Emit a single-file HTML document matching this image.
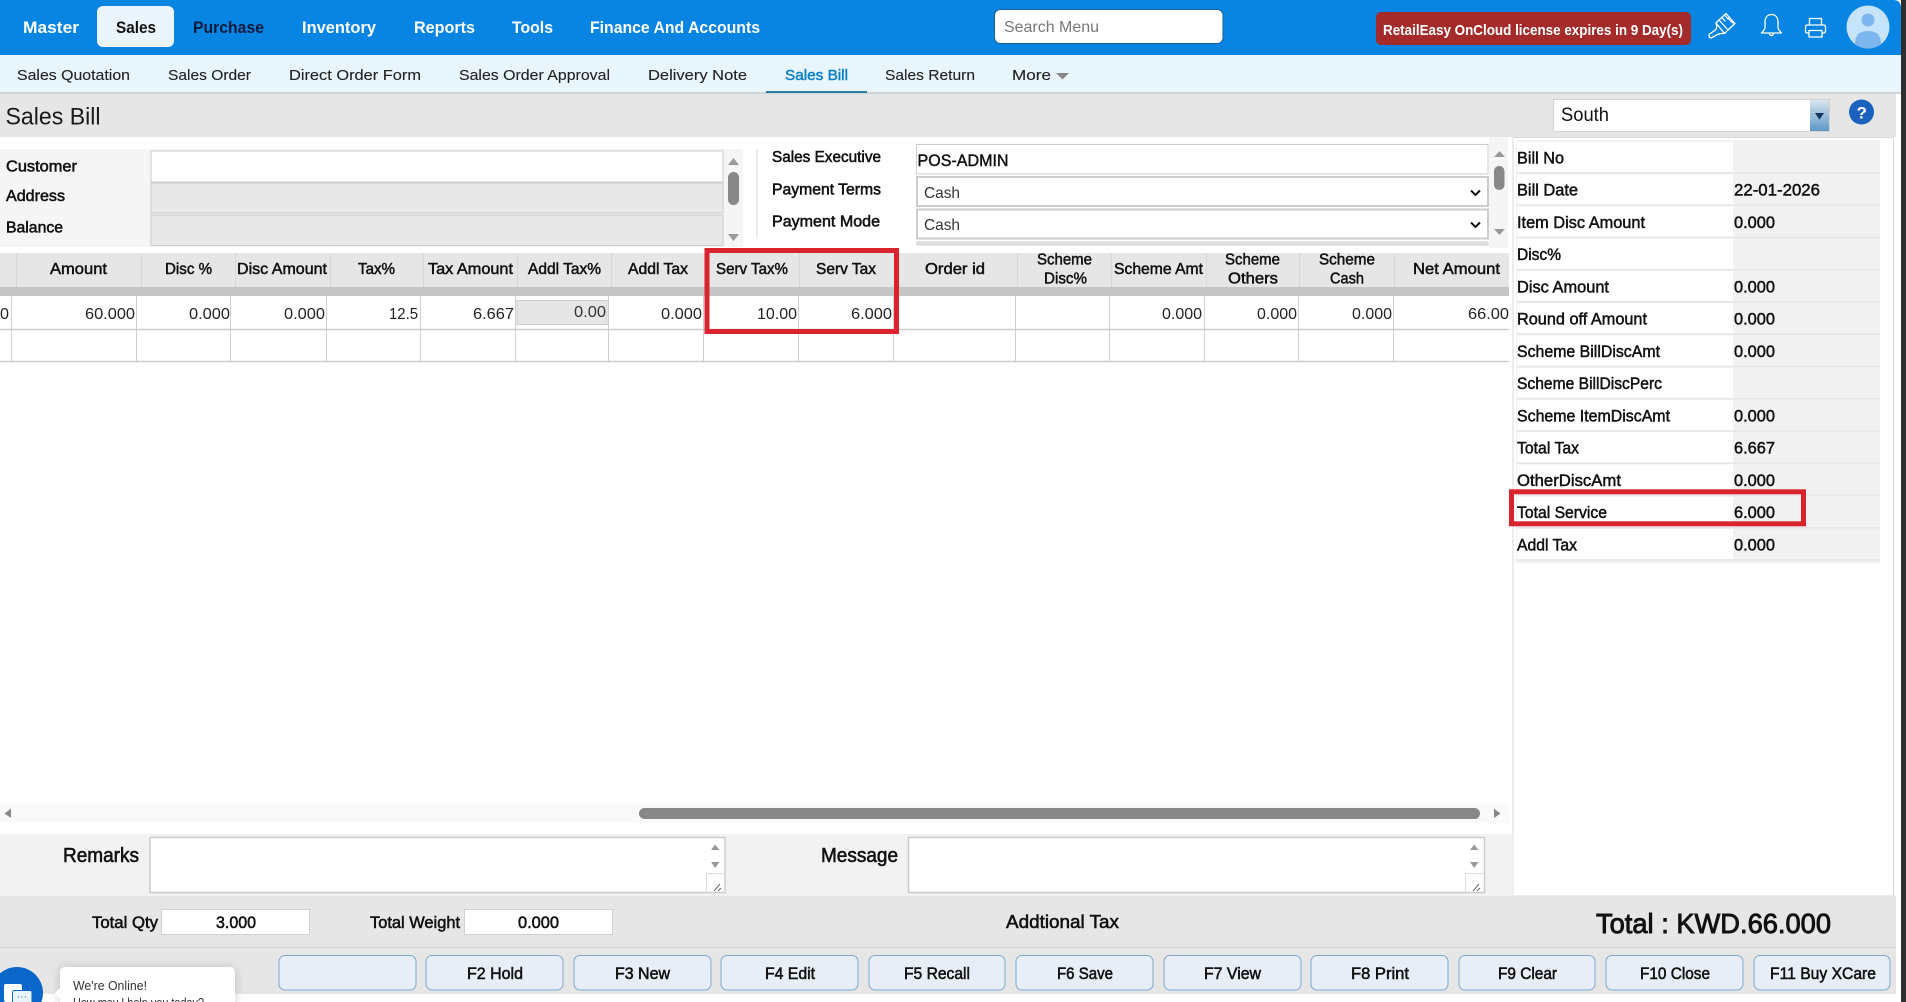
<!DOCTYPE html>
<html lang="en"><head><meta charset="utf-8"><title>Sales Bill</title>
<style>
html,body{margin:0;padding:0;width:1906px;height:1002px;overflow:hidden;background:#fff}
svg{display:block;position:absolute;left:0;top:0}
text{font-family:"Liberation Sans",Arial,sans-serif;fill:#111;white-space:pre}
.nav{font-size:17px;font-weight:bold;fill:#fff}
.sub{font-size:15px;fill:#222;stroke:#222;stroke-width:.12}
.l{font-size:16px;stroke:#111;stroke-width:.55}
.h{font-size:16px;stroke:#111;stroke-width:.5}
.v{font-size:16px;fill:#222}
.r{font-size:17px;stroke:#111;stroke-width:.5}
.b{font-size:17px;stroke:#111;stroke-width:.55}
.tri{fill:#999}
</style></head><body>
<svg width="1906" height="1002" viewBox="0 0 1906 1002" xmlns="http://www.w3.org/2000/svg">
<rect width="1906" height="1002" fill="#fff"/>
<!-- top bar -->
<path d="M0 0H1893Q1901 0 1901 8V55H0Z" fill="#0884e3"/>
<rect x="97" y="6" width="77" height="41" rx="6" fill="#eaf5fd"/>
<text class="nav" x="23" y="33" textLength="56" lengthAdjust="spacingAndGlyphs">Master</text>
<text class="nav" x="116" y="33" textLength="40" lengthAdjust="spacingAndGlyphs" style="fill:#111">Sales</text>
<text class="nav" x="193" y="33" textLength="71" lengthAdjust="spacingAndGlyphs" style="fill:#0b1a3a">Purchase</text>
<text class="nav" x="302" y="33" textLength="74" lengthAdjust="spacingAndGlyphs">Inventory</text>
<text class="nav" x="414" y="33" textLength="61" lengthAdjust="spacingAndGlyphs">Reports</text>
<text class="nav" x="512" y="33" textLength="41" lengthAdjust="spacingAndGlyphs">Tools</text>
<text class="nav" x="590" y="33" textLength="170" lengthAdjust="spacingAndGlyphs">Finance And Accounts</text>
<rect x="994.500" y="9.500" width="228.500" height="34" rx="6" fill="#fff" stroke="#17608f"/>
<text x="1004" y="32" font-size="16" style="fill:#777" textLength="95" lengthAdjust="spacingAndGlyphs">Search Menu</text>
<rect x="1376" y="12" width="315" height="33" rx="5" fill="#a52a2a"/>
<text x="1383" y="35" font-size="15" font-weight="bold" style="fill:#fff" textLength="300" lengthAdjust="spacingAndGlyphs">RetailEasy OnCloud license expires in 9 Day(s)</text>
<!-- icons -->
<g fill="none" stroke="#fff" stroke-width="1.3" stroke-linejoin="round" stroke-linecap="round">
<path d="M1719 20L1726 13.500L1735 23.500L1728 30ZM1716 23L1719 20L1728 30L1724.500 33.500ZM1716 23Q1718 29 1714 31L1709.500 34Q1708 37 1711 38L1715 36Q1719 33 1724.500 33.500M1722 17.500L1725 21M1725 15.500L1728 19M1728 18L1731 21.500M1731 21L1733 23"/>
<path d="M1771.500 14.500C1767 14.500 1765 18 1765 22.500V27.500C1765 29.500 1763 31.500 1761.500 33H1781.500C1780 31.500 1778 29.500 1778 27.500V22.500C1778 18 1776 14.500 1771.500 14.500ZM1769.500 33.500A2 2 0 0 0 1773.500 33.500"/>
<path d="M1809.500 25V18.500H1821.500V25M1809 33H1807Q1805.500 33 1805.500 31V27Q1805.500 25 1807.500 25H1823.500Q1825.500 25 1825.500 27V31Q1825.500 33 1823.500 33H1822M1809 30.500H1822V37H1809Z"/>
</g>
<circle cx="1868" cy="27" r="21.500" fill="#c5e3fb"/>
<circle cx="1868" cy="20" r="6.500" fill="#7db6ec"/>
<path d="M1855 44Q1855 31 1868 31Q1881 31 1881 44Q1875 48.500 1868 48.500Q1861 48.500 1855 44Z" fill="#7db6ec"/>
<!-- sub nav -->
<rect y="55" width="1901" height="37" fill="#e8f5fd"/>
<rect y="92" width="1901" height="2" fill="#cfd6da"/>
<text class="sub" x="17" y="80" textLength="113" lengthAdjust="spacingAndGlyphs">Sales Quotation</text>
<text class="sub" x="168" y="80" textLength="83" lengthAdjust="spacingAndGlyphs">Sales Order</text>
<text class="sub" x="289" y="80" textLength="132" lengthAdjust="spacingAndGlyphs">Direct Order Form</text>
<text class="sub" x="459" y="80" textLength="151" lengthAdjust="spacingAndGlyphs">Sales Order Approval</text>
<text class="sub" x="648" y="80" textLength="99" lengthAdjust="spacingAndGlyphs">Delivery Note</text>
<text class="sub" x="785" y="80" textLength="63" lengthAdjust="spacingAndGlyphs" style="fill:#0a80c8;stroke:#0a80c8;stroke-width:.45">Sales Bill</text>
<rect x="766" y="91" width="101" height="2" fill="#2a7f9e"/>
<text class="sub" x="885" y="80" textLength="90" lengthAdjust="spacingAndGlyphs">Sales Return</text>
<text class="sub" x="1012" y="80" textLength="39" lengthAdjust="spacingAndGlyphs">More</text>
<path d="M1056 73H1069L1062.500 79.500Z" fill="#888"/>
<!-- title bar -->
<rect y="94" width="1896" height="43" fill="#e6e6e6"/>
<text x="5.500" y="124.500" font-size="24" textLength="95" lengthAdjust="spacingAndGlyphs" style="fill:#1a1a1a">Sales Bill</text>
<rect x="1553.500" y="99.500" width="276" height="32" fill="#fff" stroke="#d4d4d4"/>
<text x="1561" y="121" font-size="19" textLength="48" lengthAdjust="spacingAndGlyphs">South</text>
<defs><linearGradient id="g" x1="0" y1="0" x2="0" y2="1"><stop offset="0" stop-color="#d8e5f0"/><stop offset="1" stop-color="#5e97c6"/></linearGradient></defs>
<rect x="1810" y="100" width="19" height="31" fill="url(#g)"/>
<path d="M1815 113H1824L1819.500 119.500Z" fill="#15355c"/>
<circle cx="1861.500" cy="112" r="12.500" fill="#1a62bd"/>
<text x="1856.500" y="118.500" font-size="17" font-weight="bold" style="fill:#fff">?</text>
<!-- left form -->
<rect y="149" width="743" height="98" fill="#f5f5f5"/>
<rect x="151" y="151" width="572" height="31" fill="#fff" stroke="#ccc"/>
<rect x="151" y="183" width="572" height="30" fill="#e8e8e8" stroke="#ccc"/>
<rect x="151" y="215" width="572" height="30.500" fill="#e8e8e8" stroke="#ccc"/>
<text class="l" x="6" y="171.500" textLength="71" lengthAdjust="spacingAndGlyphs">Customer</text>
<text class="l" x="6" y="201" textLength="59" lengthAdjust="spacingAndGlyphs">Address</text>
<text class="l" x="6" y="232.500" textLength="57" lengthAdjust="spacingAndGlyphs">Balance</text>
<path class="tri" d="M728 165H739L733.500 158Z M728 234H739L733.500 241Z"/>
<rect x="728" y="172" width="11" height="33" rx="5.500" fill="#888"/>
<rect x="756.500" y="149" width="1" height="88" fill="#d4d4d4"/>
<text class="l" x="772" y="162" textLength="109" lengthAdjust="spacingAndGlyphs">Sales Executive</text>
<text class="l" x="772" y="194.500" textLength="109" lengthAdjust="spacingAndGlyphs">Payment Terms</text>
<text class="l" x="772" y="226.500" textLength="108" lengthAdjust="spacingAndGlyphs">Payment Mode</text>
<!-- right form -->
<rect x="1489" y="137" width="19" height="111" fill="#f5f5f5"/>
<rect x="916.500" y="144.500" width="571.500" height="29.500" fill="#fff" stroke="#ccc"/>
<rect x="917" y="177" width="571" height="29" fill="#fff" stroke="#ccc" stroke-width="2"/>
<rect x="917" y="209.500" width="571" height="29" fill="#fff" stroke="#ccc" stroke-width="2"/>
<rect x="917" y="242" width="571" height="3" fill="#e6e6e6" stroke="#ccc"/>
<text x="917.500" y="166" font-size="17" textLength="91" lengthAdjust="spacingAndGlyphs" style="stroke:#111;stroke-width:.45">POS-ADMIN</text>
<text x="924" y="198" font-size="16" textLength="36" lengthAdjust="spacingAndGlyphs" style="fill:#333">Cash</text>
<text x="924" y="230" font-size="16" textLength="36" lengthAdjust="spacingAndGlyphs" style="fill:#333">Cash</text>
<path d="M1471 190.500L1475.500 195L1480 190.500M1471 222.500L1475.500 227L1480 222.500" fill="none" stroke="#111" stroke-width="2"/>
<path class="tri" d="M1494 157H1505L1499.500 151Z M1494 229H1505L1499.500 235Z"/>
<rect x="1494" y="166" width="10.500" height="24" rx="5" fill="#888"/>
<!-- right panel -->
<rect x="1513" y="137.500" width="380.500" height="758.500" fill="#fff" stroke="#d8d8d8"/>
<rect x="1516" y="140" width="364" height="423" fill="#f1f1f1"/>
<g fill="#fff">
<rect x="1517" y="142" width="216" height="30"/><rect x="1517" y="174.250" width="216" height="30"/><rect x="1517" y="206.500" width="216" height="30"/><rect x="1517" y="238.750" width="216" height="30"/><rect x="1517" y="271" width="216" height="30"/><rect x="1517" y="303.250" width="216" height="30"/><rect x="1517" y="335.500" width="216" height="30"/><rect x="1517" y="367.750" width="216" height="30"/><rect x="1517" y="400" width="216" height="30"/><rect x="1517" y="432.250" width="216" height="30"/><rect x="1517" y="464.500" width="216" height="30"/><rect x="1517" y="496.750" width="216" height="30"/><rect x="1517" y="529" width="216" height="30"/>
</g>
<g>
<path d="M1517 173H1880M1517 205.200H1880M1517 237.500H1880M1517 269.700H1880M1517 302H1880M1517 334.200H1880M1517 366.500H1880M1517 398.700H1880M1517 431H1880M1517 463.200H1880M1517 495.500H1880M1517 527.700H1880M1517 560H1880" stroke="#e6e6e6" stroke-width="1.500" fill="none"/>
<text class="r" x="1517" y="163.300" textLength="47" lengthAdjust="spacingAndGlyphs">Bill No</text>
<text class="r" x="1517" y="195.500" textLength="61" lengthAdjust="spacingAndGlyphs">Bill Date</text>
<text class="r" x="1517" y="227.800" textLength="128" lengthAdjust="spacingAndGlyphs">Item Disc Amount</text>
<text class="r" x="1517" y="260" textLength="44" lengthAdjust="spacingAndGlyphs">Disc%</text>
<text class="r" x="1517" y="292.300" textLength="92" lengthAdjust="spacingAndGlyphs">Disc Amount</text>
<text class="r" x="1517" y="324.500" textLength="130" lengthAdjust="spacingAndGlyphs">Round off Amount</text>
<text class="r" x="1517" y="356.800" textLength="143" lengthAdjust="spacingAndGlyphs">Scheme BillDiscAmt</text>
<text class="r" x="1517" y="389" textLength="145" lengthAdjust="spacingAndGlyphs">Scheme BillDiscPerc</text>
<text class="r" x="1517" y="421.300" textLength="153" lengthAdjust="spacingAndGlyphs">Scheme ItemDiscAmt</text>
<text class="r" x="1517" y="453.500" textLength="62" lengthAdjust="spacingAndGlyphs">Total Tax</text>
<text class="r" x="1517" y="485.800" textLength="104" lengthAdjust="spacingAndGlyphs">OtherDiscAmt</text>
<text class="r" x="1517" y="518" textLength="90" lengthAdjust="spacingAndGlyphs">Total Service</text>
<text class="r" x="1517" y="550.300" textLength="60" lengthAdjust="spacingAndGlyphs">Addl Tax</text>
<text class="r" x="1734" y="195.500" textLength="86" lengthAdjust="spacingAndGlyphs">22-01-2026</text>
<text class="r" x="1734" y="227.800" textLength="41" lengthAdjust="spacingAndGlyphs">0.000</text>
<text class="r" x="1734" y="292.300" textLength="41" lengthAdjust="spacingAndGlyphs">0.000</text>
<text class="r" x="1734" y="324.500" textLength="41" lengthAdjust="spacingAndGlyphs">0.000</text>
<text class="r" x="1734" y="356.800" textLength="41" lengthAdjust="spacingAndGlyphs">0.000</text>
<text class="r" x="1734" y="421.300" textLength="41" lengthAdjust="spacingAndGlyphs">0.000</text>
<text class="r" x="1734" y="453.500" textLength="41" lengthAdjust="spacingAndGlyphs">6.667</text>
<text class="r" x="1734" y="485.800" textLength="41" lengthAdjust="spacingAndGlyphs">0.000</text>
<text class="r" x="1734" y="518" textLength="41" lengthAdjust="spacingAndGlyphs">6.000</text>
<text class="r" x="1734" y="550.300" textLength="41" lengthAdjust="spacingAndGlyphs">0.000</text>
</g>
<!-- grid -->
<rect y="253" width="1509" height="34" fill="#e6e6e6"/>
<rect y="287" width="1509" height="9" fill="#c6c6c6"/>
<path d="M16.500 253V287M141.500 253V287M235.500 253V287M330.500 253V287M423.500 253V287M517.500 253V287M611.500 253V287M705.500 253V287M799.500 253V287M894.500 253V287M1017.500 253V287M1111.500 253V287M1206.500 253V287M1299.500 253V287M1394.500 253V287" stroke="#d8d8d8" fill="none"/>
<path d="M11.500 296V362M136.500 296V362M230.500 296V362M326.500 296V362M420.500 296V362M515.500 296V362M608.500 296V362M703.500 296V362M798.500 296V362M893.500 296V362M1015.500 296V362M1109.500 296V362M1204.500 296V362M1298.500 296V362M1393.500 296V362" stroke="#d0d0d0" fill="none"/>
<path d="M0 329.500H1509M0 361.500H1509" stroke="#ccc" stroke-width="1.500" fill="none"/>
<text class="h" x="50" y="274" textLength="57" lengthAdjust="spacingAndGlyphs">Amount</text>
<text class="h" x="165" y="274" textLength="47" lengthAdjust="spacingAndGlyphs">Disc %</text>
<text class="h" x="237" y="274" textLength="90" lengthAdjust="spacingAndGlyphs">Disc Amount</text>
<text class="h" x="358" y="274" textLength="37" lengthAdjust="spacingAndGlyphs">Tax%</text>
<text class="h" x="428" y="274" textLength="85" lengthAdjust="spacingAndGlyphs">Tax Amount</text>
<text class="h" x="528" y="274" textLength="73" lengthAdjust="spacingAndGlyphs">Addl Tax%</text>
<text class="h" x="628" y="274" textLength="60" lengthAdjust="spacingAndGlyphs">Addl Tax</text>
<text class="h" x="716" y="274" textLength="72" lengthAdjust="spacingAndGlyphs">Serv Tax%</text>
<text class="h" x="816" y="274" textLength="60" lengthAdjust="spacingAndGlyphs">Serv Tax</text>
<text class="h" x="925" y="274" textLength="60" lengthAdjust="spacingAndGlyphs">Order id</text>
<text class="h" x="1037" y="264.500" textLength="55" lengthAdjust="spacingAndGlyphs">Scheme</text>
<text class="h" x="1044" y="283.500" textLength="43" lengthAdjust="spacingAndGlyphs">Disc%</text>
<text class="h" x="1114" y="274" textLength="89" lengthAdjust="spacingAndGlyphs">Scheme Amt</text>
<text class="h" x="1225" y="264.500" textLength="55" lengthAdjust="spacingAndGlyphs">Scheme</text>
<text class="h" x="1228" y="283.500" textLength="50" lengthAdjust="spacingAndGlyphs">Others</text>
<text class="h" x="1319" y="264.500" textLength="56" lengthAdjust="spacingAndGlyphs">Scheme</text>
<text class="h" x="1330" y="283.500" textLength="34" lengthAdjust="spacingAndGlyphs">Cash</text>
<text class="h" x="1413" y="274" textLength="87" lengthAdjust="spacingAndGlyphs">Net Amount</text>
<text class="v" x="0" y="319" textLength="9" lengthAdjust="spacingAndGlyphs">0</text>
<text class="v" x="85" y="319" textLength="50" lengthAdjust="spacingAndGlyphs">60.000</text>
<text class="v" x="189" y="319" textLength="41" lengthAdjust="spacingAndGlyphs">0.000</text>
<text class="v" x="284" y="319" textLength="41" lengthAdjust="spacingAndGlyphs">0.000</text>
<text class="v" x="389" y="319" textLength="29" lengthAdjust="spacingAndGlyphs">12.5</text>
<text class="v" x="473" y="319" textLength="41" lengthAdjust="spacingAndGlyphs">6.667</text>
<rect x="517" y="300.500" width="90" height="24" fill="#e6e6e6" stroke="#ccc"/>
<text class="v" x="574" y="317" textLength="32" lengthAdjust="spacingAndGlyphs" style="fill:#333">0.00</text>
<text class="v" x="661" y="319" textLength="41" lengthAdjust="spacingAndGlyphs">0.000</text>
<text class="v" x="757" y="319" textLength="40" lengthAdjust="spacingAndGlyphs">10.00</text>
<text class="v" x="851" y="319" textLength="41" lengthAdjust="spacingAndGlyphs">6.000</text>
<text class="v" x="1162" y="319" textLength="40" lengthAdjust="spacingAndGlyphs">0.000</text>
<text class="v" x="1257" y="319" textLength="40" lengthAdjust="spacingAndGlyphs">0.000</text>
<text class="v" x="1352" y="319" textLength="40" lengthAdjust="spacingAndGlyphs">0.000</text>
<text class="v" x="1468" y="319" textLength="41" lengthAdjust="spacingAndGlyphs">66.00</text>
<!-- red highlights -->
<rect x="707" y="250.500" width="189.500" height="81" fill="none" stroke="#d9232e" stroke-width="5"/>
<rect x="1511.500" y="491.800" width="292" height="32" fill="none" stroke="#d9232e" stroke-width="5"/>
<!-- h scrollbar -->
<rect y="804" width="1509" height="19" fill="#fafafa"/>
<rect x="639" y="808" width="841" height="11" rx="5.500" fill="#888"/>
<path d="M11 808.500V818L4.500 813.500Z" fill="#888"/>
<path d="M1494 808.500V818L1500.500 813.500Z" fill="#888"/>
<!-- remarks -->
<rect y="834" width="1513" height="62" fill="#f2f2f2"/>
<text x="63" y="862" font-size="20" textLength="76" lengthAdjust="spacingAndGlyphs" style="stroke:#111;stroke-width:.6">Remarks</text>
<text x="821" y="862" font-size="20" textLength="77" lengthAdjust="spacingAndGlyphs" style="stroke:#111;stroke-width:.6">Message</text>
<rect x="150" y="837.500" width="575" height="55" fill="#fff" stroke="#ccc" stroke-width="1.500"/>
<rect x="908.500" y="837.500" width="576" height="55" fill="#fff" stroke="#ccc" stroke-width="1.500"/>
<path class="tri" d="M711 850H719.500L715.200 844.500Z M711 862H719.500L715.200 868Z M1470 850H1478.500L1474.200 844.500Z M1470 862H1478.500L1474.200 868Z"/>
<path d="M706.500 892V873.500H725M1465.500 892V873.500H1485" fill="none" stroke="#ddd"/>
<path d="M714 891L720 884M718 891L721 888M1473 891L1479 884M1477 891L1480 888" stroke="#666" fill="none"/>
<!-- bottom -->
<rect y="896" width="1896" height="98" fill="#e6e6e6"/>
<rect y="947" width="1896" height="1" fill="#cfcfcf"/>
<text class="b" x="92" y="928" textLength="66" lengthAdjust="spacingAndGlyphs">Total Qty</text>
<rect x="161.500" y="909.500" width="148" height="25" fill="#fff" stroke="#d2d2d2"/>
<text class="b" x="216" y="928" textLength="40" lengthAdjust="spacingAndGlyphs">3.000</text>
<text class="b" x="370" y="928" textLength="90" lengthAdjust="spacingAndGlyphs">Total Weight</text>
<rect x="464.500" y="909.500" width="148" height="25" fill="#fff" stroke="#d2d2d2"/>
<text class="b" x="518" y="928" textLength="41" lengthAdjust="spacingAndGlyphs">0.000</text>
<text class="b" x="1006" y="928" style="font-size:18px" textLength="113" lengthAdjust="spacingAndGlyphs">Addtional Tax</text>
<text x="1596" y="933" font-size="28" textLength="235" lengthAdjust="spacingAndGlyphs" style="stroke:#111;stroke-width:.9">Total : KWD.66.000</text>
<!-- buttons -->
<g fill="#e8eef7" stroke="#7fa8d0">
<rect x="279" y="955.500" width="137" height="34.500" rx="6"/><rect x="426" y="955.500" width="137" height="34.500" rx="6"/><rect x="574" y="955.500" width="137" height="34.500" rx="6"/><rect x="721" y="955.500" width="137" height="34.500" rx="6"/><rect x="869" y="955.500" width="136" height="34.500" rx="6"/><rect x="1016" y="955.500" width="137" height="34.500" rx="6"/><rect x="1164" y="955.500" width="137" height="34.500" rx="6"/><rect x="1311" y="955.500" width="137" height="34.500" rx="6"/><rect x="1459" y="955.500" width="136" height="34.500" rx="6"/><rect x="1606" y="955.500" width="137" height="34.500" rx="6"/><rect x="1754" y="955.500" width="136" height="34.500" rx="6"/>
</g>
<text class="b" x="467" y="979" textLength="56" lengthAdjust="spacingAndGlyphs">F2 Hold</text>
<text class="b" x="615" y="979" textLength="55" lengthAdjust="spacingAndGlyphs">F3 New</text>
<text class="b" x="765" y="979" textLength="50" lengthAdjust="spacingAndGlyphs">F4 Edit</text>
<text class="b" x="904" y="979" textLength="66" lengthAdjust="spacingAndGlyphs">F5 Recall</text>
<text class="b" x="1057" y="979" textLength="56" lengthAdjust="spacingAndGlyphs">F6 Save</text>
<text class="b" x="1204" y="979" textLength="57" lengthAdjust="spacingAndGlyphs">F7 View</text>
<text class="b" x="1351" y="979" textLength="58" lengthAdjust="spacingAndGlyphs">F8 Print</text>
<text class="b" x="1498" y="979" textLength="59" lengthAdjust="spacingAndGlyphs">F9 Clear</text>
<text class="b" x="1640" y="979" textLength="70" lengthAdjust="spacingAndGlyphs">F10 Close</text>
<text class="b" x="1770" y="979" textLength="106" lengthAdjust="spacingAndGlyphs">F11 Buy XCare</text>
<!-- chat -->
<circle cx="17" cy="993" r="26" fill="#0a66c8"/>
<rect x="4" y="984" width="18" height="18" rx="2" fill="#fff"/>
<rect x="12.500" y="990.500" width="19.500" height="14" rx="2" fill="#e9f3fc" stroke="#0a66c8"/>
<path d="M18 997H19M21.500 997H22.500M25 997H26" stroke="#0a66c8" stroke-width="1"/>
<rect x="60" y="967" width="175" height="45" rx="5" fill="#fff" style="filter:drop-shadow(0 1px 5px rgba(0,0,0,.18))"/>
<path d="M60 988L54.500 993.500L60 999Z" fill="#fff"/>
<text x="73" y="990" font-size="13" textLength="74" lengthAdjust="spacingAndGlyphs" style="fill:#333">We're Online!</text>
<text x="73" y="1007" font-size="13" textLength="131" lengthAdjust="spacingAndGlyphs" style="fill:#333">How may I help you today?</text>
<!-- window edge -->
<rect x="1901" width="5" height="1002" fill="#2e2e2e"/>
</svg>
</body></html>
